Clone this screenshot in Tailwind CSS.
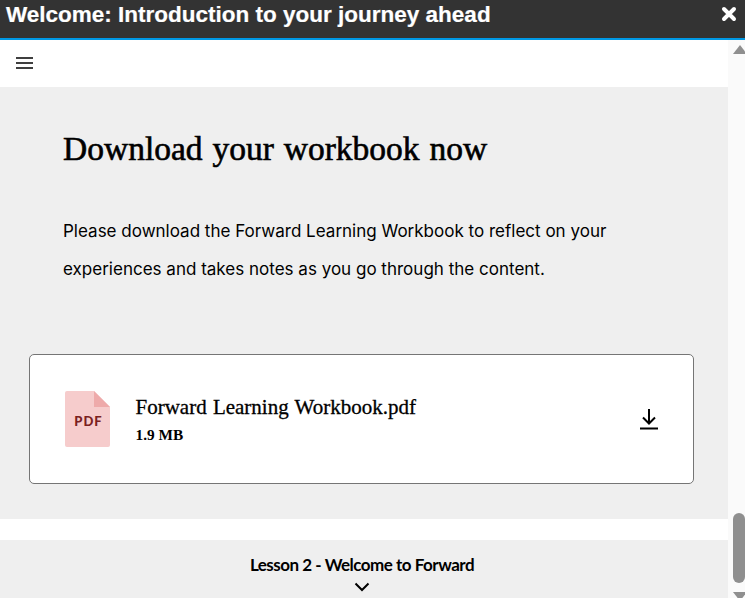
<!DOCTYPE html>
<html lang="en">
<head>
  <meta charset="UTF-8">
  <title>Welcome</title>
  <meta name="viewport" content="width=device-width, initial-scale=1.0">
  <script src="https://cdn.jsdelivr.net/npm/@tailwindcss/browser@4"></script>
</head>
<body class="bg-white h-[598px] overflow-hidden flex flex-col font-['Liberation_Sans',sans-serif]">

  <!-- Title bar -->
  <header class="h-10 shrink-0 bg-[#333333] border-b-2 border-[#0099e5] flex items-start justify-between pl-[6px] pr-[8px]">
    <h1 class="text-[22.500px] leading-[29px] font-bold text-white [-webkit-text-stroke:0.2px_white]">Welcome: Introduction to your journey ahead</h1>
    <svg class="mt-[6px]" width="16" height="16" viewBox="0 0 16 16"><path d="M3 3l10 10M13 3L3 13" stroke="#fff" stroke-width="4" stroke-linecap="round"/></svg>
  </header>

  <div class="flex flex-1 min-h-0">
    <main class="w-[728px] shrink-0 flex flex-col">
      <!-- Menu row -->
      <div class="h-[47px] shrink-0 flex items-center pl-[16px]">
        <svg width="18" height="14" viewBox="0 0 18 14" class="mt-[-2px]"><path d="M0 2h17M0 7h17M0 12h17" stroke="#000" stroke-width="1.500"/></svg>
      </div>

      <!-- Workbook section -->
      <section class="h-[432px] shrink-0 bg-[#efefef] px-[29px] pt-[42px]">
        <div class="pl-[34px]">
          <h2 class="font-['Liberation_Serif',serif] text-[33.500px] leading-[40px] font-normal text-black [word-spacing:1.500px] [-webkit-text-stroke:0.6px_black]">Download your workbook now</h2>
          <p class="mt-[43px] font-['Inter',sans-serif] text-[17.030px] leading-[38px] text-black">Please download the Forward Learning Workbook to reflect on your<br>experiences and takes notes as you go through the content.</p>
        </div>
        <div class="mt-[66px] w-[665px] h-[130px] bg-white border border-[#757575] rounded-[5px] flex items-center pl-[35px] pr-[34px]">
          <svg width="46" height="56" viewBox="0 0 46 56" class="shrink-0">
            <path d="M2 0h27l16 16v38a2 2 0 0 1-2 2H2a2 2 0 0 1-2-2V2a2 2 0 0 1 2-2z" fill="#f6cccc"/>
            <path d="M29 0l16 16H29z" fill="#eeaaaa"/>
            <text x="23.500" y="35" text-anchor="middle" font-family="Lato, sans-serif" font-weight="900" font-size="13" letter-spacing="1" fill="#7a2020">PDF</text>
          </svg>
          <div class="ml-[24.500px] mt-[3px] flex-1 font-['Liberation_Serif',serif] text-black">
            <div class="text-[21px] leading-[27px] font-normal [word-spacing:1px] [-webkit-text-stroke:0.3px_black]">Forward Learning Workbook.pdf</div>
            <div class="text-[15.300px] leading-[27px] font-bold">1.9 MB</div>
          </div>
          <svg width="20" height="22" viewBox="0 0 20 22"><path d="M10 1v14M4 9.500l6 6 6-6" fill="none" stroke="#000" stroke-width="2"/><path d="M1 20.500h18" stroke="#000" stroke-width="2"/></svg>
        </div>
      </section>

      <div class="h-[21px] shrink-0"></div>

      <!-- Next lesson -->
      <div class="flex-1 bg-[#efefef] flex flex-col items-center pt-[15px] pr-[4px]">
        <div class="font-['Lato',sans-serif] text-[17px] leading-[20px] font-bold tracking-[-0.500px] text-black">Lesson 2 - Welcome to Forward</div>
        <svg width="16" height="10" viewBox="0 0 16 10" class="mt-[7px]"><path d="M1.500 1.500L8 8l6.500-6.500" fill="none" stroke="#000" stroke-width="2"/></svg>
      </div>
    </main>

    <!-- Scrollbar -->
    <aside class="relative flex-1 bg-[#fafafa]">
      <div class="absolute left-[5px] top-[5px] w-0 h-0 border-x-[7px] border-x-transparent border-b-[9px] border-b-[#8f8f8f]"></div>
      <div class="absolute left-[5px] top-[473px] w-[12px] h-[70px] rounded-[6px] bg-[#8f8f8f]"></div>
      <div class="absolute left-[5px] top-[552px] w-0 h-0 border-x-[7px] border-x-transparent border-t-[9px] border-t-[#8f8f8f]"></div>
    </aside>
  </div>
</body>
</html>
